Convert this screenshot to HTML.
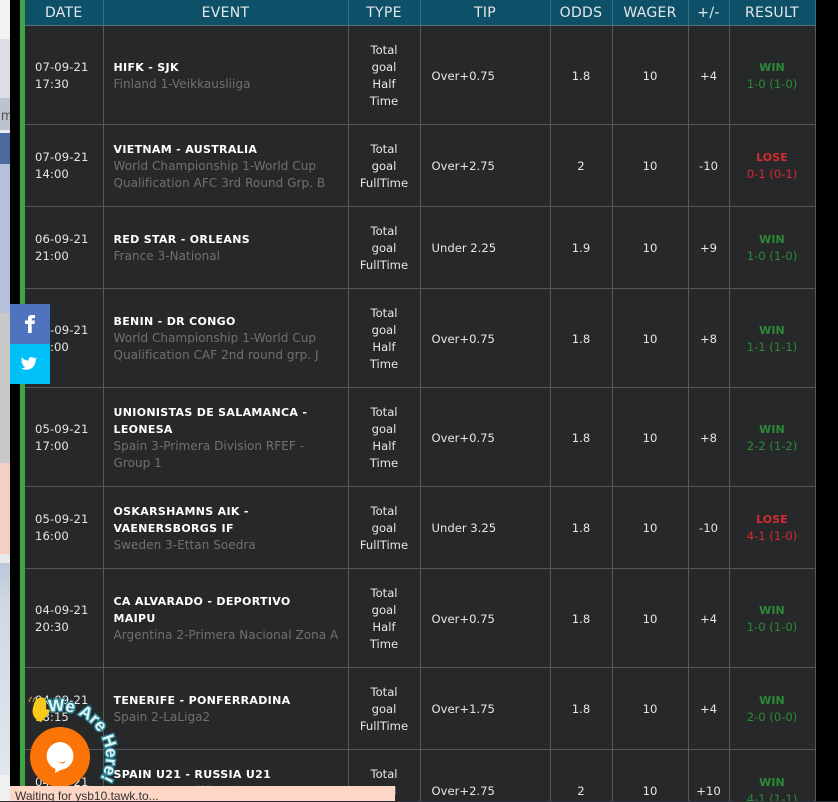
<!DOCTYPE html>
<html lang="en"><head><meta charset="utf-8"><title>Tips</title>
<style>
html,body{margin:0;padding:0;background:#000;width:838px;height:802px;overflow:hidden}
body{position:relative;font-family:"DejaVu Sans","Liberation Sans",sans-serif;color:#eee}
.s{position:absolute;left:0;width:10px}
#bar{position:absolute;left:20px;top:0;width:5px;height:802px;background:#3fa648}
table{position:absolute;left:25px;top:0;width:790px;table-layout:fixed;border-collapse:collapse;background:#27282a;font-size:11.6px;line-height:17px;color:#e6e6e6}
td,th{border:1px solid #565759;padding:2px 0 0;text-align:center;vertical-align:middle;overflow:hidden;box-sizing:border-box}
th{height:25px;background:#0e5068;color:#e3e8ea;font-weight:400;font-size:14px;border-top:0;border-left-color:#3b6c7e;border-right-color:#3b6c7e;border-bottom-color:#5d6b72;letter-spacing:.3px;padding:2px 0 0}
th:first-child{border-left:0}
td:first-child{border-left:0;text-align:left;padding-left:10px;letter-spacing:.1px}
td.e{text-align:left;padding-left:10px;font-size:12px;letter-spacing:.05px}
td.e b{display:block;color:#fff;font-size:11px;letter-spacing:.32px}
td.e span{display:block;color:#6f7072}
td.t{text-align:left;padding-left:11px}
tr.h td:nth-child(n+4):nth-child(-n+7){padding-top:4px}
td.r b{display:block;font-size:11px;letter-spacing:.1px}
.w{color:#2c8a37}.l{color:#d42a30}
#soc{position:absolute;left:10px;top:304px;width:40px;height:80px}
#f{height:40px;background:#4f73bd}#tw{height:40px;background:#00c0f7}
#status{position:absolute;left:10px;top:786px;width:385px;height:16px;background:#fdd6c5;color:#333;font:12px/21px "Liberation Sans",sans-serif;padding-left:5px;box-sizing:border-box;overflow:hidden}
#line{position:absolute;left:0;top:801px;width:838px;height:1px;background:#2c3238}
svg{position:absolute;overflow:visible}
</style></head><body>
<div class="s" style="top:0;height:39px;background:#f2f2f5"></div>
<div class="s" style="top:39px;height:59px;background:#dddee4"></div>
<div class="s" style="top:98px;height:32px;background:#bcc3cf;color:#555;font:14px/34px 'Liberation Sans',sans-serif;overflow:hidden"><span style="position:absolute;left:1px;top:0">m</span></div>
<div class="s" style="top:130px;height:3px;background:#e8ebf2"></div>
<div class="s" style="top:133px;height:31px;background:#4a6aa0"></div>
<div class="s" style="top:164px;height:149px;background:#b4c0dc"></div>
<div class="s" style="top:313px;height:150px;background:#c8c8c9"></div>
<div class="s" style="top:463px;height:91px;background:#f4cfc5"></div>
<div class="s" style="top:554px;height:9px;background:#e9e9eb"></div>
<div class="s" style="top:563px;height:212px;background:linear-gradient(#bcc8d9,#d0d8e4 20%,#e2e6ee)"></div>
<div class="s" style="top:775px;height:27px;background:#f1f1f1"></div>
<div id="bar"></div>
<table>
<colgroup><col style="width:78px"><col style="width:245px"><col style="width:72px"><col style="width:130px"><col style="width:62px"><col style="width:76px"><col style="width:41px"><col style="width:86px"></colgroup>
<tr><th>DATE</th><th>EVENT</th><th>TYPE</th><th>TIP</th><th>ODDS</th><th>WAGER</th><th>+/-</th><th>RESULT</th></tr>
<tr class="h" style="height:99px"><td>07-09-21<br>17:30</td><td class="e"><b>HIFK - SJK</b><span>Finland 1-Veikkausliiga</span></td><td>Total<br>goal<br>Half<br>Time</td><td class="t">Over+0.75</td><td>1.8</td><td>10</td><td>+4</td><td class="r w"><b>WIN</b>1-0 (1-0)</td></tr>
<tr style="height:82px"><td>07-09-21<br>14:00</td><td class="e"><b>VIETNAM - AUSTRALIA</b><span>World Championship 1-World Cup<br>Qualification AFC 3rd Round Grp. B</span></td><td>Total<br>goal<br>FullTime</td><td class="t">Over+2.75</td><td>2</td><td>10</td><td>-10</td><td class="r l"><b>LOSE</b>0-1 (0-1)</td></tr>
<tr style="height:82px"><td>06-09-21<br>21:00</td><td class="e"><b>RED STAR - ORLEANS</b><span>France 3-National</span></td><td>Total<br>goal<br>FullTime</td><td class="t">Under 2.25</td><td>1.9</td><td>10</td><td>+9</td><td class="r w"><b>WIN</b>1-0 (1-0)</td></tr>
<tr class="h" style="height:99px"><td>05-09-21<br>17:00</td><td class="e"><b>BENIN - DR CONGO</b><span>World Championship 1-World Cup<br>Qualification CAF 2nd round grp. J</span></td><td>Total<br>goal<br>Half<br>Time</td><td class="t">Over+0.75</td><td>1.8</td><td>10</td><td>+8</td><td class="r w"><b>WIN</b>1-1 (1-1)</td></tr>
<tr class="h" style="height:99px"><td>05-09-21<br>17:00</td><td class="e"><b>UNIONISTAS DE SALAMANCA -<br>LEONESA</b><span>Spain 3-Primera Division RFEF -<br>Group 1</span></td><td>Total<br>goal<br>Half<br>Time</td><td class="t">Over+0.75</td><td>1.8</td><td>10</td><td>+8</td><td class="r w"><b>WIN</b>2-2 (1-2)</td></tr>
<tr style="height:82px"><td>05-09-21<br>16:00</td><td class="e"><b>OSKARSHAMNS AIK -<br>VAENERSBORGS IF</b><span>Sweden 3-Ettan Soedra</span></td><td>Total<br>goal<br>FullTime</td><td class="t">Under 3.25</td><td>1.8</td><td>10</td><td>-10</td><td class="r l"><b>LOSE</b>4-1 (1-0)</td></tr>
<tr class="h" style="height:99px"><td>04-09-21<br>20:30</td><td class="e"><b>CA ALVARADO - DEPORTIVO<br>MAIPU</b><span>Argentina 2-Primera Nacional Zona A</span></td><td>Total<br>goal<br>Half<br>Time</td><td class="t">Over+0.75</td><td>1.8</td><td>10</td><td>+4</td><td class="r w"><b>WIN</b>1-0 (1-0)</td></tr>
<tr style="height:82px"><td>04-09-21<br>18:15</td><td class="e"><b>TENERIFE - PONFERRADINA</b><span>Spain 2-LaLiga2</span></td><td>Total<br>goal<br>FullTime</td><td class="t">Over+1.75</td><td>1.8</td><td>10</td><td>+4</td><td class="r w"><b>WIN</b>2-0 (0-0)</td></tr>
<tr style="height:82px"><td>04-09-21<br>16:00</td><td class="e"><b>SPAIN U21 - RUSSIA U21</b><span>Euro U21 Qualification<br>Group</span></td><td>Total<br>goal<br>FullTime</td><td class="t">Over+2.75</td><td>2</td><td>10</td><td>+10</td><td class="r w"><b>WIN</b>4-1 (1-1)</td></tr>
</table>
<div id="soc"><div id="f"></div><div id="tw"></div></div>
<svg style="left:10px;top:304px" width="40" height="80" viewBox="0 0 40 80">
<path fill="#fff" d="M18 29V20H15V16.500H18V14C18 12 19.500 11 21.500 11C23 11 24.500 11.100 25 11.200V14.200H23.200C22 14.200 21.700 14.800 21.700 15.600V16.500H25L24.500 20H21.700V29Z"/>
<g transform="translate(11,53) scale(.87) translate(-13.800,-52)"><path fill="#fff" d="M28.500 54.500c.9-.5 1.400-1.200 1.700-2.200-.8.500-1.700.8-2.300.9-1.900-2.100-6-.8-5.300 3-3.200-.1-5.700-1.500-7.700-3.800-1.100 1.800-.5 3.900 1 5-.6 0-1.300-.2-1.800-.5 0 2 1.400 3.300 3.100 3.800-.6.100-1.200.1-1.700 0 .5 1.500 1.900 2.500 3.400 2.600-1.600 1.300-3.600 1.900-5.200 1.700 6.400 4 17.200 1.200 16.900-10.200.8-.5 1.400-1.200 1.900-2-.7.300-1.300.5-2 .6z"/></g>
</svg>
<svg style="left:0;top:680px" width="140" height="122" viewBox="0 0 140 122">
<path d="M29 22q1-4 3-5M33 22q1-4 3-5" stroke="#c9a52c" stroke-width="1" fill="none"/>
<path fill="#f8c91b" d="M34 24c1-5 8-9 11-5 2 2 1 8 1 10l4 1c-1 4-5 8-9 12-4-1-7-4-8-8-1-3 0-7 1-10z"/>
<circle cx="60" cy="77" r="30" fill="#fb7408"/>
<path fill="#fff" d="M60 62a14 14 0 0 1 1 27.900L55 93l.5-4A14 14 0 0 1 60 62z"/>
<path fill="#fb7408" d="M58 81q4 2.500 8 0q-3 5-8 0z"/>
<path id="arc" d="M48.900 32.400A46 46 0 0 1 97.700 103.400" fill="none"/>
<text font-family="Liberation Sans,sans-serif" font-weight="700" font-size="17" fill="#e4f7f8" stroke="#2b8494" stroke-width="2.800" paint-order="stroke"><textPath href="#arc">We Are Here!</textPath></text>
</svg>
<div id="status">Waiting for ysb10.tawk.to...</div>
<div id="line"></div>
</body></html>
